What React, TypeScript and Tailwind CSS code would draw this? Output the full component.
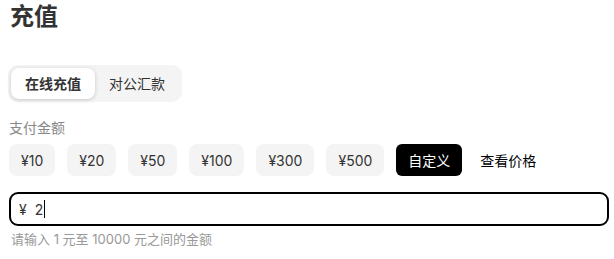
import React from "react";

export default function App() {
  const amounts = ["¥10", "¥20", "¥50", "¥100", "¥300", "¥500"];
  return (
    <div
      className="w-[614px] h-[259px] bg-white pl-[9px] pr-[5px] pt-[1px] text-[#333]"
      style={{ fontFamily: 'Inter, "Noto Sans CJK SC", sans-serif' }}
    >
      <h1 className="text-[24px] font-bold leading-[32px] text-[#333] pl-[1px]">充值</h1>
      <div className="mt-[32px] inline-flex items-center rounded-[10px] bg-[#f4f4f4] p-[3px] -ml-[1px]">
        <div className="h-[31px] px-[14px] flex items-center rounded-[8px] bg-white shadow-[0_1px_4px_rgba(0,0,0,0.18)] text-[14px] font-bold">
          在线充值
        </div>
        <div className="h-[31px] px-[14px] flex items-center text-[14px] text-[#333]">对公汇款</div>
      </div>
      <div className="mt-[16px] text-[14px] text-[#888] leading-[20px]">支付金额</div>
      <div className="mt-[6px] flex items-center gap-[12px]">
        {amounts.map((a) => (
          <div
            key={a}
            className="h-[32px] px-[12px] flex items-center rounded-[8px] bg-[#f4f4f4] text-[14px] text-[#333]"
          >
            {a}
          </div>
        ))}
        <div className="h-[32px] px-[12px] flex items-center rounded-[6px] bg-black text-white text-[14px]">
          自定义
        </div>
        <div className="h-[32px] px-[6px] flex items-center text-[14px] text-black">查看价格</div>
      </div>
      <div className="mt-[16px] h-[34px] w-[600px] rounded-[9px] border-2 border-black flex items-center pl-[8px] text-[14px] text-[#333]">
        <span>¥</span>
        <span className="ml-[8px]">2</span>
        <span className="w-px h-[18px] bg-black ml-[1px]" />
      </div>
      <div className="mt-[4px] pl-[2px] text-[13px] text-[#999] leading-[18px]">请输入 1 元至 10000 元之间的金额</div>
    </div>
  );
}
